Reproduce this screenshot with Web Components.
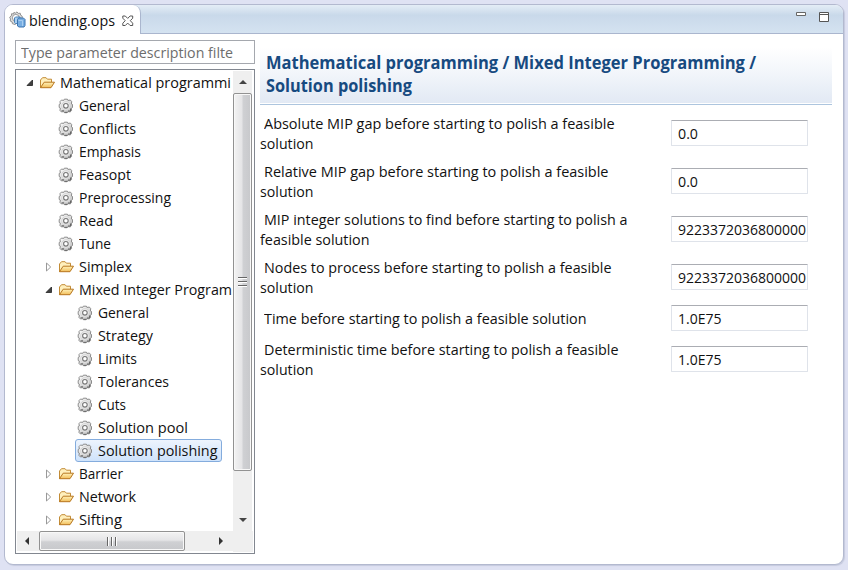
<!DOCTYPE html>
<html lang="en">
<head>
<meta charset="utf-8">
<title>blending.ops</title>
<style>
html,body{margin:0;height:100%;overflow:hidden}
body{background:#dfe2f3;font:15px/20px "Open Sans","Noto Sans",sans-serif;color:#111}
</style>
</head>
<body>
<ops-editor></ops-editor>
<script>
const define = (name, html, setup) => customElements.define(name, class extends HTMLElement {
  connectedCallback() {
    if (this.shadowRoot) return;
    const t = document.createElement('template');
    t.innerHTML = typeof html === 'function' ? html(this) : html;
    this.attachShadow({mode: 'open'}).append(t.content.cloneNode(true));
    if (setup) setup(this);
  }
});

/* A single line condensed horizontally to occupy the width given in "w". */
define('fit-text', el => `<style>:host{display:block;white-space:pre;width:${el.getAttribute('w')}px}span{display:inline-block;transform-origin:0 0}</style><span>${el.getAttribute('text')}</span>`, el => {
  const s = el.shadowRoot.querySelector('span');
  s.style.transform = `scaleX(${(+el.getAttribute('w') / s.getBoundingClientRect().width).toFixed(4)})`;
});

const icons = {
  gear: `<svg width="16" height="16" viewBox="0 0 16 16"><defs><linearGradient id="g" x2="1" y2="1"><stop stop-color="#fff"/><stop offset="1" stop-color="#bdbdbd"/></linearGradient></defs><path d="M6.3 1.2h3.1l.5 1.2 2.5-.3 1.3 1.5-.3 2.4 1.1.5v3l-1.1.6.2 2.4-1.4 1.4-2.4-.3-.7 1.1H6.4l-.6-1.1-2.4.3L2 12.500l.3-2.500L1.200 9.400V6.500L2.300 6 2 3.600l1.400-1.500 2.400.3z" fill="url(#g)" stroke="#8b8b8b"/><path d="M3.500 12.800h2.600M10 13h2.500v-2.500M6.500 14.300h3" stroke="#666" fill="none"/><circle cx="7.900" cy="7.800" r="4.200" fill="#ededed" stroke="#ccc" stroke-width=".7"/><circle cx="7.900" cy="7.800" r="2.300" fill="#fff" stroke="#777" stroke-width="1.100"/></svg>`,
  folder: `<svg width="16" height="16" viewBox="0 0 16 16"><defs><linearGradient id="f" x2="0" y2="1"><stop stop-color="#fff3bc"/><stop offset="1" stop-color="#f2bd58"/></linearGradient></defs><path d="M1.500 12.800V5L3.500 2.700h3.600l1.300 1.500H12.500v3" fill="#fff0bd" stroke="#c28b35"/><path d="M1.500 12.700L5.200 7.200H15.500L12 12.700z" fill="url(#f)" stroke="#b7761f" stroke-linejoin="round"/></svg>`,
  ops: `<svg width="17" height="17" viewBox="0 0 17 17"><path d="M5 1.300l1.200 1L8 .9l1.200 1.500 2-.2.500 2 1.500 1v3L6 13.500l-2.600-.800L3.200 11 1.200 10l.3-2L.7 6.200 2.300 4.900l.3-2.200 1.800.2z" fill="#dcdcdc" stroke="#888" stroke-width=".9"/><circle cx="6.800" cy="6.800" r="3.400" fill="#fff" stroke="#999"/><path d="M5.500 7l1-1h4.500v6.500h-4.500l-1-1z" fill="#a9d0f3" stroke="#4b83b9"/><path d="M8.500 8.500l1-1.500h5l1.500 1.500v6l-1 1.500H10l-1.500-1z" fill="#78aee2" stroke="#3c75b0"/><path d="M9.500 9.500H13.500v5.500" fill="none" stroke="#a8cdf0"/></svg>`,
  close: `<svg width="12" height="12" viewBox="0 0 12 12"><path d="M.8 1H3.300L5.700 3.400 8.100 1h2.600v2.200L8.300 5.700l2.400 2.500v2.300H8.100L5.700 8.100l-2.400 2.400H.8V8.200l2.400-2.500L.8 3.200z" fill="#fff" stroke="#555"/></svg>`,
  open: `<svg width="8" height="8" viewBox="0 0 8 8"><path d="M6.500 1v5.500H1z" fill="#404040" stroke="#222" stroke-width=".8"/></svg>`,
  shut: `<svg width="8" height="10" viewBox="0 0 8 10"><path d="M1.500 1v8L5.700 5z" fill="#fff" stroke="#999"/></svg>`,
  up: `<svg width="10" height="6" viewBox="0 0 10 6"><path d="M1 5L5 1l4 4z" fill="#444"/></svg>`,
  down: `<svg width="10" height="6" viewBox="0 0 10 6"><path d="M1 1l4 4 4-4z" fill="#444"/></svg>`,
  left: `<svg width="6" height="10" viewBox="0 0 6 10"><path d="M5 1L1 5l4 4z" fill="#333"/></svg>`,
  right: `<svg width="6" height="10" viewBox="0 0 6 10"><path d="M1 1l4 4-4 4z" fill="#333"/></svg>`,
  min: `<svg width="10" height="4" viewBox="0 0 10 4"><path d="M.5.5h9v3h-9z" fill="#fff" stroke="#666"/></svg>`,
  max: `<svg width="10" height="10" viewBox="0 0 10 10"><path d="M.5.5h9v9h-9zM.5 2.500h9" fill="#fff" stroke="#555"/></svg>`
};
define('ui-icon', el => `<style>:host{display:block;flex:none}svg{display:block}</style>${icons[el.getAttribute('name')]}`);

define('tree-item', el => {
  const a = n => el.getAttribute(n), lvl = +a('level');
  return `<style>
  :host{display:flex;height:23px;align-items:center;padding-left:${5 + lvl * 19}px;line-height:21px;font-size:15px}
  .tw{box-sizing:border-box;width:14px;height:23px;display:grid;place-items:center;flex:none;padding-left:2px}
  .body{display:flex;align-items:center;height:21px;border:1px solid transparent;border-radius:3px;margin-left:1px;padding:0 3px 0 1px;gap:5px}
  :host([selected]) .body{border-color:#84acdd;background:linear-gradient(#edf4fd,#cfe3fb)}
  </style><div class="tw">${a('state') ? `<ui-icon name="${a('state')}"></ui-icon>` : ''}</div>
  <div class="body"><ui-icon name="${a('state') ? 'folder' : 'gear'}"></ui-icon><fit-text w="${a('w')}" text="${a('text')}"></fit-text></div>`;
});

define('scroll-bar', el => {
  const v = el.hasAttribute('vertical');
  return `<style>
  :host{display:flex;flex-direction:${v ? 'column' : 'row'};background:#efefef}
  .btn{flex:0 0 22px;display:grid;place-items:center;box-sizing:border-box;${v ? '' : 'padding-right:3px'}}
  .thumb{flex:0 0 ${el.getAttribute('size')}px;box-sizing:border-box;border:1px solid #929292;border-radius:2px;box-shadow:inset 0 0 0 1px #f8f8f8;
    background:linear-gradient(${v ? '90deg' : '180deg'},#f3f3f3,#e5e5e7 45%,#cfd0d3 55%,#c7c8cb);display:flex;flex-direction:${v ? 'column' : 'row'};gap:2px;align-items:center;justify-content:center}
  i{${v ? 'width:9px;height:1px;border-bottom:1px solid #fff' : 'height:9px;width:1px;border-right:1px solid #fff'};background:#666}
  .rest{flex:1}</style>
  <div class="btn"><ui-icon name="${v ? 'up' : 'left'}"></ui-icon></div><div class="thumb"><i></i><i></i><i></i></div><div class="rest"></div>
  <div class="btn"><ui-icon name="${v ? 'down' : 'right'}"></ui-icon></div>`;
});

const tree = [
  [0, 'Mathematical programmi', 171, 'open'],
  [1, 'General', 51], [1, 'Conflicts', 57], [1, 'Emphasis', 62], [1, 'Feasopt', 52], [1, 'Preprocessing', 92], [1, 'Read', 34], [1, 'Tune', 32],
  [1, 'Simplex', 53, 'shut'], [1, 'Mixed Integer Program', 153, 'open'],
  [2, 'General', 51], [2, 'Strategy', 55], [2, 'Limits', 39], [2, 'Tolerances', 71], [2, 'Cuts', 28], [2, 'Solution pool', 90], [2, 'Solution polishing', 119.500, '', 1],
  [1, 'Barrier', 44, 'shut'], [1, 'Network', 57, 'shut'], [1, 'Sifting', 43, 'shut']
];
define('param-tree', `<style>
  :host{display:grid;grid-template:460px 21px / 216px 20px;box-sizing:border-box;width:240px;height:485px;border:1px solid #828790;padding:1px;background:#fff}
  .rows{overflow:hidden;margin-right:1px}.corner{background:#efefef}
  scroll-bar[vertical]{margin-right:1px}.h{margin-bottom:1px}</style>
  <div class="rows">${tree.map(([l, t, w, s, sel]) => `<tree-item level="${l}" text="${t}" w="${w}" state="${s || ''}" ${sel ? 'selected' : ''}></tree-item>`).join('')}</div>
  <scroll-bar vertical size="378"></scroll-bar><scroll-bar class="h" size="146"></scroll-bar><div class="corner"></div>`);

define('filter-box', `<style>:host{display:block;box-sizing:border-box;width:240px;height:24px;border:1px solid #a5a8ae;background:#fff;color:#6d6d6d;padding:0 5px;line-height:22px;overflow:hidden}</style>
  <fit-text w="212" text="Type parameter description filte"></fit-text>`);

define('form-header', `<style>:host{display:block;box-sizing:border-box;height:58px;padding:4px 0 0 6px;font-weight:700;font-size:17px;line-height:23px;color:#174a80;
  background:linear-gradient(#fff,#f4f7fb 40%,#e2e9f4) no-repeat 0 0/100% 56px;border-bottom:1px solid #adc5de}</style>
  <fit-text w="490" text="Mathematical programming / Mixed Integer Programming /"></fit-text><fit-text w="146" text="Solution polishing"></fit-text>`);

define('param-row', el => {
  const a = n => el.getAttribute(n);
  return `<style>:host{display:flex;justify-content:space-between;align-items:center;padding-right:24px;min-height:26px}
  .first{padding-left:4px}
  .box{box-sizing:border-box;width:137px;height:26px;border:1px solid #dfe3ea;border-top-color:#abadb3;border-radius:1px;padding:0 0 0 6px;line-height:24px}</style>
  <div><fit-text class="first" w="${a('w')}" text="${a('a')}"></fit-text>${a('b') ? `<fit-text w="${a('w2')}" text="${a('b')}"></fit-text>` : ''}</div>
  <div class="box"><fit-text w="${a('vw')}" text="${a('v')}"></fit-text></div>`;
});
const params = [
  ['Absolute MIP gap before starting to polish a feasible', 350.500, 'solution', 53.500, '0.0', 20],
  ['Relative MIP gap before starting to polish a feasible', 344.500, 'solution', 53.500, '0.0', 20],
  ['MIP integer solutions to find before starting to polish a', 363.500, 'feasible solution', 109.500, '9223372036800000', 128],
  ['Nodes to process before starting to polish a feasible', 347.500, 'solution', 53.500, '9223372036800000', 128],
  ['Time before starting to polish a feasible solution', 322.500, '', 0, '1.0E75', 43.500],
  ['Deterministic time before starting to polish a feasible', 354.500, 'solution', 53.500, '1.0E75', 43.500]
];
define('param-form', `<style>:host{display:flex;flex-direction:column;gap:8px;width:572px}</style>
  <form-header></form-header>${params.map(p => `<param-row a="${p[0]}" w="${p[1]}" b="${p[2]}" w2="${p[3]}" v="${p[4]}" vw="${p[5]}"></param-row>`).join('')}`);

define('tab-bar', `<style>
  :host{display:flex;justify-content:space-between;height:29px;background:linear-gradient(#e4edf6,#c9d9ea 35%,#d5e3f1);box-shadow:inset 0 -1px #aab6ce}
  .tab{display:flex;align-items:center;box-sizing:border-box;width:136px;height:29px;background:#fff;border-right:1px solid #aab6ce;border-radius:0 8px 0 0;padding-left:4px}
  fit-text{margin-left:3px}.x{margin-left:7px;margin-top:2px}
  .win{display:flex;gap:13px;padding:7px 14px 0 0}</style>
  <div class="tab"><ui-icon name="ops"></ui-icon><fit-text w="86" text="blending.ops"></fit-text><ui-icon class="x" name="close"></ui-icon></div>
  <div class="win"><ui-icon name="min"></ui-icon><ui-icon name="max"></ui-icon></div>`);

define('ops-editor', `<style>
  :host{display:block;box-sizing:border-box;height:570px;padding:4px 4px 5px}
  .frame{box-sizing:border-box;height:561px;border:1px solid #b3b9cf;border-radius:9px;background:#fff;overflow:hidden;box-shadow:1px 1px 1px #c5cade}
  .main{display:flex;gap:5px;padding:6px 0 0 10px}
  .side{display:flex;flex-direction:column;gap:5px}
  param-form{padding-top:7px}</style>
  <div class="frame"><tab-bar></tab-bar><div class="main"><div class="side"><filter-box></filter-box><param-tree></param-tree></div><param-form></param-form></div></div>`);
</script>
</body>
</html>
